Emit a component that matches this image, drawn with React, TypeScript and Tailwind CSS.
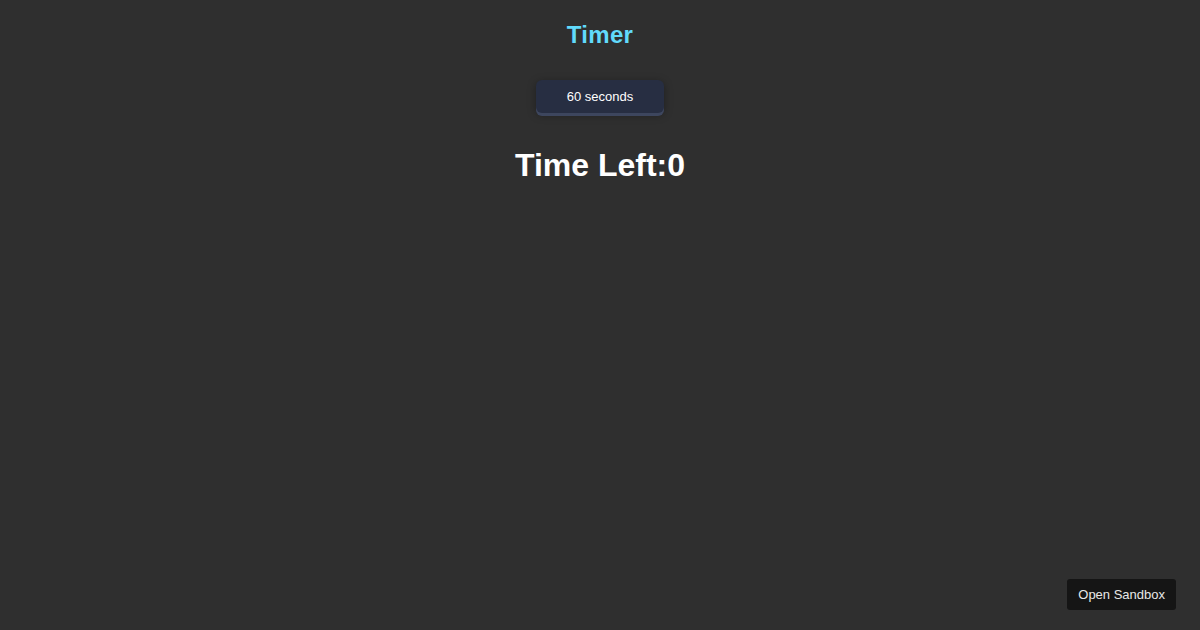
import { useState } from 'react'

export default function App() {
  const [left] = useState(0)

  return (
    <div className="relative min-h-[630px] w-full bg-[#2f2f2f] font-['Liberation_Sans',Arial,sans-serif] text-white">
      <div className="flex flex-col items-center pt-[21px]">
        <h1 className="text-[24px] font-bold leading-[28px] tracking-[0.3px] text-[#61dafb]">Timer</h1>
        <button
          type="button"
          className="mt-[31px] h-[33px] w-[128px] rounded-[6px] bg-[#272e42] text-[13px] text-white shadow-[0_3px_0_#3d465e,0_2px_8px_rgba(0,0,0,0.35)]"
        >
          60 seconds
        </button>
        <h2 className="mt-[34px] text-[32px] font-bold leading-[36px]">Time Left:{left}</h2>
      </div>
      <button
        type="button"
        className="absolute bottom-[20px] right-[24px] h-[31px] rounded-[3px] bg-[#151515] px-[11px] text-[13px] text-[#e8e8e8]"
      >
        Open Sandbox
      </button>
    </div>
  )
}
